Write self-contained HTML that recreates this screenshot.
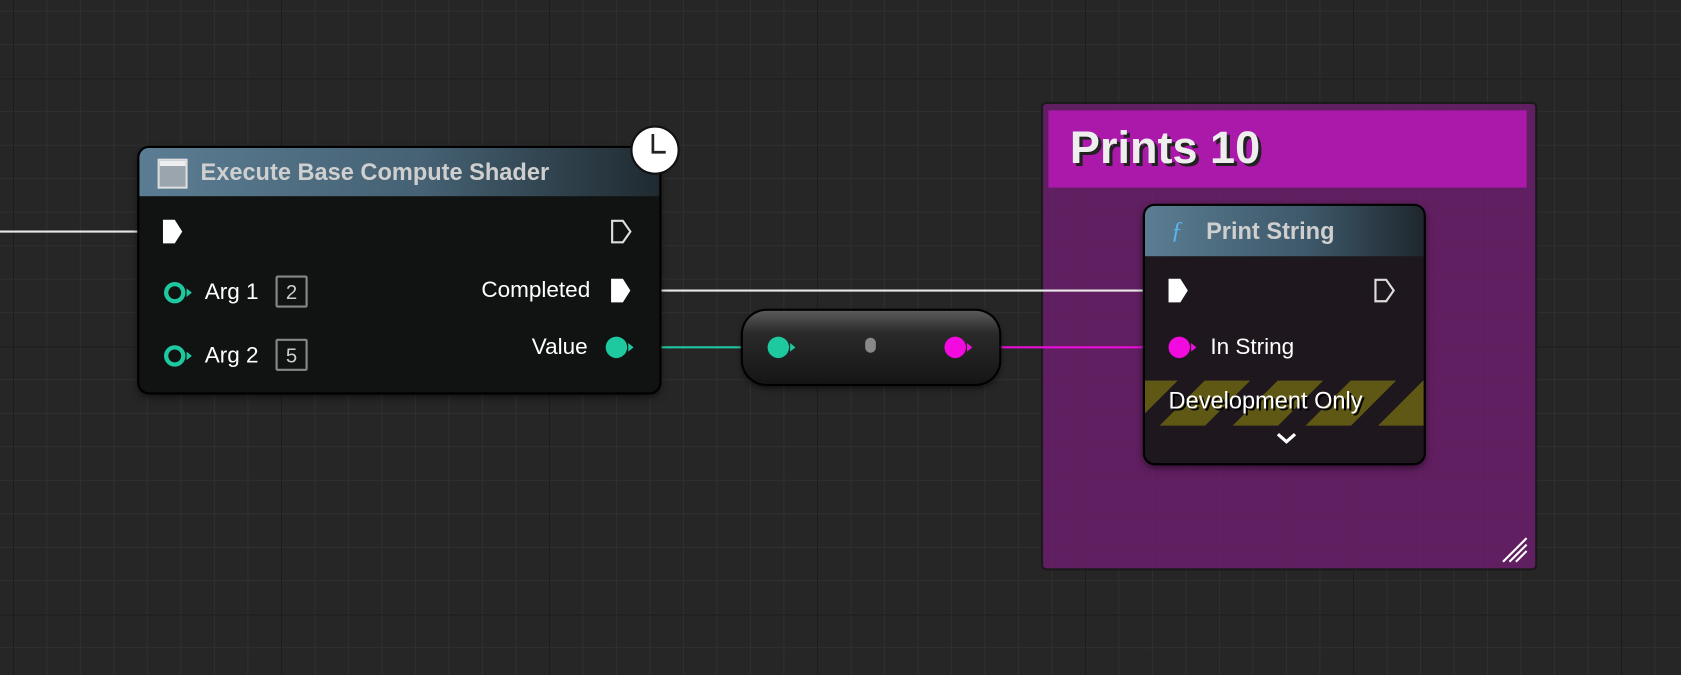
<!DOCTYPE html>
<html><head><style>
html,body{margin:0;padding:0;width:1681px;height:675px;overflow:hidden;background:#262626;}
#w{position:absolute;left:0;top:0;width:1568px;height:630px;transform:scale(1.07206);transform-origin:0 0;
background-color:#262626;
background-image:linear-gradient(#1a1a1a 1px,transparent 1px),linear-gradient(90deg,#1a1a1a 1px,transparent 1px),linear-gradient(#303030 1px,transparent 1px),linear-gradient(90deg,#303030 1px,transparent 1px);
background-size:250px 250px,250px 250px,31.25px 31.25px,31.25px 31.25px;background-position:-10px 73px,12px -10px,-10px 10px,12px -10px;
font-family:"Liberation Sans",sans-serif;}
.abs{position:absolute}
.node{position:absolute;border-radius:9px;box-shadow:0 0 0 2px #000,0 3px 8px rgba(0,0,0,.7);overflow:hidden}
.t{position:absolute;color:#fff;font-size:21px;white-space:nowrap}
.box{position:absolute;border:2px solid #888;border-radius:2px;color:#ccc;font-size:19px;width:30px;height:30px;text-align:center;line-height:30px;box-sizing:border-box}
</style></head><body><div id="w">
<div class="abs" style="left:973px;top:97px;width:459px;height:433px;background:rgba(110,30,110,.82);box-shadow:0 0 0 2px #1a1a1a;border-radius:3px"></div>
<div class="abs" style="left:978px;top:103px;width:446px;height:72px;background:#ab19ab"></div>
<div class="t" style="left:998px;top:114px;font-size:42px;font-weight:bold;color:#eee;text-shadow:3px 3px 0 #222">Prints 10</div>
<svg class="abs" style="left:1398px;top:500px" width="30" height="28"><path d="M4 24l22-22M10 24l16-16M16 24l10-10" stroke="#fff" stroke-width="2"/></svg>
<svg class="abs" style="left:0;top:0" width="1568" height="630">
<line x1="0" y1="216" x2="152" y2="216" stroke="#e8e8e8" stroke-width="2"/>
<line x1="592" y1="271" x2="1092" y2="271" stroke="#e8e8e8" stroke-width="2"/>
<line x1="592" y1="324" x2="716" y2="324" stroke="#1ec9a0" stroke-width="2"/>
<line x1="905" y1="324" x2="1092" y2="324" stroke="#e80ed8" stroke-width="2"/>
</svg>
<div class="node" style="left:130px;top:138px;width:485px;height:228px;background:#101311">
<div class="abs" style="left:0;top:0;width:485px;height:45px;background:linear-gradient(90deg,#5b7d93 0%,#456173 55%,#1f2a30 100%)"></div>
<div class="abs" style="left:17px;top:10px;width:28px;height:28px;background:linear-gradient(#eee 0,#eee 20%,#9aa5ae 20%);border:2px solid #ddd;box-sizing:border-box"></div>
<div class="t" style="left:57px;top:10px;font-weight:bold;color:#cfcfcf;font-size:22px">Execute Base Compute Shader</div>
</div>
<svg class="abs" style="left:0;top:0" width="1568" height="630">
<path d="M152 205h11l7 11-7 11h-11z" fill="#fff"/>
<path d="M571 206h10l7 10-7 10h-10z" fill="none" stroke="#ddd" stroke-width="2"/>
<path d="M570 260h11l7 11-7 11h-11z" fill="#fff"/>
<circle cx="163" cy="273" r="8" fill="none" stroke="#1ec9a0" stroke-width="4"/><path d="M174 269l5 4-5 4z" fill="#1ec9a0"/>
<circle cx="163" cy="332" r="8" fill="none" stroke="#1ec9a0" stroke-width="4"/><path d="M174 328l5 4-5 4z" fill="#1ec9a0"/>
<circle cx="575" cy="324" r="10" fill="#1ec9a0"/><path d="M586 320l5 4-5 4z" fill="#1ec9a0"/>
<circle cx="611" cy="140" r="22" fill="#fff" stroke="#111" stroke-width="2"/>
<path d="M609 125v17h12" fill="none" stroke="#222" stroke-width="2.5"/>
</svg>
<div class="t" style="left:191px;top:261px">Arg 1</div>
<div class="box" style="left:257px;top:257px">2</div>
<div class="t" style="left:191px;top:320px">Arg 2</div>
<div class="box" style="left:257px;top:316px">5</div>
<div class="t" style="left:449px;top:259px">Completed</div>
<div class="t" style="left:496px;top:312px">Value</div>
<div class="abs" style="left:693px;top:290px;width:239px;height:68px;border-radius:22px;background:linear-gradient(#5a5a5a 0,#2a2a2a 30%,#151515 100%);box-shadow:0 0 0 2px #000,0 3px 6px rgba(0,0,0,.7)"></div>
<svg class="abs" style="left:0;top:0" width="1568" height="630">
<circle cx="726" cy="324" r="10" fill="#1ec9a0"/><path d="M737 320l5 4-5 4z" fill="#1ec9a0"/>
<rect x="807" y="315" width="10" height="14" rx="5" fill="#888"/>
<circle cx="891" cy="324" r="10" fill="#f20adf"/><path d="M902 320l5 4-5 4z" fill="#f20adf"/>
</svg>
<div class="node" style="left:1068px;top:192px;width:260px;height:240px;background:#1e171e">
<div class="abs" style="left:0;top:0;width:260px;height:47px;background:linear-gradient(90deg,#5b7d93 0%,#3c5768 60%,#1f272d 100%)"></div>
<div class="t" style="left:24px;top:10px;font-style:italic;color:#5ab4ee;font-size:23px;font-family:'Liberation Serif',serif">ƒ</div>
<div class="t" style="left:57px;top:11px;font-weight:bold;color:#cfcfcf;font-size:22px">Print String</div>
<div class="abs" style="left:0;top:163px;width:260px;height:42px;background:repeating-linear-gradient(-45deg,#5f5814 0 30px,#1e171e 30px 48px)"></div>
<div class="t" style="left:22px;top:169px;font-size:22px;text-shadow:2px 2px 0 #000">Development Only</div>
</div>
<svg class="abs" style="left:0;top:0" width="1568" height="630">
<path d="M1090 260h11l7 11-7 11h-11z" fill="#fff"/>
<path d="M1283 261h10l7 10-7 10h-10z" fill="none" stroke="#ddd" stroke-width="2"/>
<circle cx="1100" cy="324" r="10" fill="#f20adf"/><path d="M1111 320l5 4-5 4z" fill="#f20adf"/>
<path d="M1192 405l8 7 8-7" fill="none" stroke="#fff" stroke-width="3"/>
</svg>
<div class="t" style="left:1129px;top:312px">In String</div>
</div></body></html>
